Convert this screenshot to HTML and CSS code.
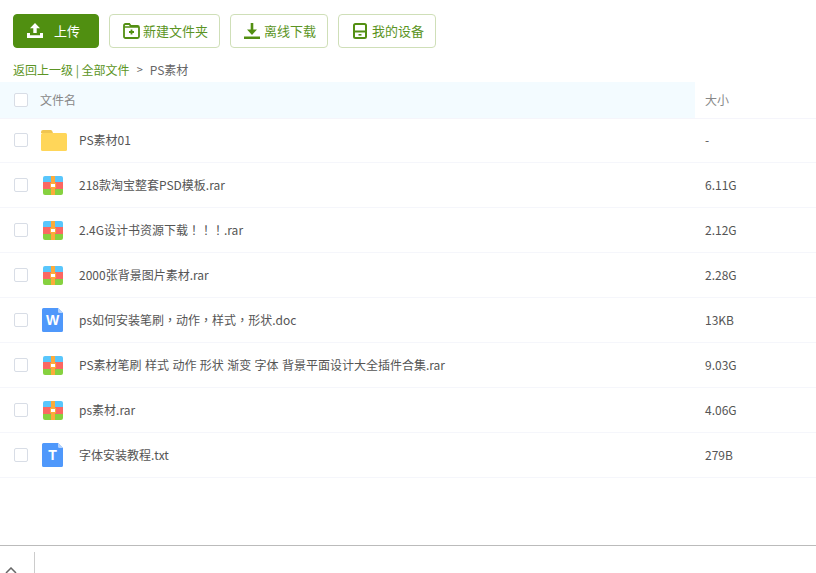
FILE: index.html
```html
<!DOCTYPE html>
<html lang="zh-CN">
<head>
<meta charset="utf-8">
<title>PS素材</title>
<link rel="stylesheet" href="styles.css">
</head>
<body>
<svg class="defs" width="0" height="0" aria-hidden="true">
  <symbol id="i-folder" viewBox="0 0 26 21">
    <path d="M0 2a2 2 0 0 1 2-2h7.500a2 2 0 0 1 1.600.8L12 3H0z" fill="#f0c550"/>
    <rect x="0" y="3" width="26" height="18" rx="1.500" fill="#ffd659"/>
  </symbol>
  <symbol id="i-rar" viewBox="0 0 20 19">
    <path d="M2 0h16a2 2 0 0 1 2 2v4H0V2a2 2 0 0 1 2-2z" fill="#59c6fb"/>
    <rect x="0" y="6" width="20" height="7" fill="#fb6762"/>
    <path d="M0 13h20v4a2 2 0 0 1-2 2H2a2 2 0 0 1-2-2z" fill="#86d13f"/>
    <rect x="8" y="0" width="4" height="19" fill="#fcab3a"/>
    <rect x="7.500" y="7.500" width="5" height="4" fill="#fff" stroke="#fcab3a" stroke-width="1"/>
  </symbol>
  <symbol id="i-doc" viewBox="0 0 21 24">
    <path d="M1.500 0H16l5 5v17.500a1.500 1.500 0 0 1-1.500 1.500h-18A1.500 1.500 0 0 1 0 22.500v-21A1.500 1.500 0 0 1 1.500 0z" fill="#4f98fb"/>
    <path d="M16 0l5 5h-3.500A1.500 1.500 0 0 1 16 3.500z" fill="#b5d3fd"/>
  </symbol>
</svg>

<div class="toolbar">
  <button class="btn btn-primary">
    <svg viewBox="0 0 16 15" width="16" height="15"><path d="M8 0l5 5.200H9.700V10H6.300V5.200H3z" fill="#fff"/><path d="M0 10h3v2.300h10V10h3v5H0z" fill="#fff"/></svg>
    <span>上传</span>
  </button>
  <button class="btn btn-new">
    <svg viewBox="0 0 17 16" width="17" height="16"><path d="M1 3V2.500A1.500 1.500 0 0 1 2.500 1h3.800l1.500 2H14.500A1.500 1.500 0 0 1 16 4.500v9a1.500 1.500 0 0 1-1.500 1.500h-12A1.500 1.500 0 0 1 1 13.500z" fill="none" stroke="#538f12" stroke-width="1.800"/><path d="M1 4h15" stroke="#538f12" stroke-width="1.500"/><path d="M8.500 6.500v5M6 9h5" stroke="#538f12" stroke-width="1.800"/></svg>
    <span>新建文件夹</span>
  </button>
  <button class="btn btn-down">
    <svg viewBox="0 0 16 16" width="16" height="16"><path d="M6.700 0h2.600v6.500H13L8 12 3 6.500h3.700z" fill="#538f12"/><path d="M0 13.500h16V16H0z" fill="#538f12"/></svg>
    <span>离线下载</span>
  </button>
  <button class="btn btn-device">
    <svg viewBox="0 0 14 16" width="14" height="16"><rect x="1" y="1" width="12" height="14" rx="1.500" fill="none" stroke="#538f12" stroke-width="2"/><path d="M1 8.500h12" stroke="#538f12" stroke-width="2"/><path d="M5.500 11.800h3" stroke="#538f12" stroke-width="1.600"/></svg>
    <span>我的设备</span>
  </button>
</div>

<div class="crumbs"><span class="crumb-link">返回上一级 | 全部文件</span><span class="crumb-sep">&gt;</span><span>PS素材</span></div>

<div class="table-head">
  <div class="cell-check"><span class="check"></span></div>
  <div class="head-name">文件名</div>
  <div class="head-size">大小</div>
</div>

<div class="row">
  <div class="cell-check"><span class="check"></span></div>
  <div class="cell-icon"><svg class="fi-folder"><use href="#i-folder"/></svg></div>
  <div class="cell-name">PS素材01</div>
  <div class="cell-size">-</div>
</div>
<div class="row">
  <div class="cell-check"><span class="check"></span></div>
  <div class="cell-icon"><svg class="fi-rar"><use href="#i-rar"/></svg></div>
  <div class="cell-name">218款淘宝整套PSD模板.rar</div>
  <div class="cell-size">6.11G</div>
</div>
<div class="row">
  <div class="cell-check"><span class="check"></span></div>
  <div class="cell-icon"><svg class="fi-rar"><use href="#i-rar"/></svg></div>
  <div class="cell-name">2.4G设计书资源下载<span class="punct" lang="zh-Hant">！！！</span>.rar</div>
  <div class="cell-size">2.12G</div>
</div>
<div class="row">
  <div class="cell-check"><span class="check"></span></div>
  <div class="cell-icon"><svg class="fi-rar"><use href="#i-rar"/></svg></div>
  <div class="cell-name">2000张背景图片素材.rar</div>
  <div class="cell-size">2.28G</div>
</div>
<div class="row">
  <div class="cell-check"><span class="check"></span></div>
  <div class="cell-icon"><span class="fi-doc"><svg><use href="#i-doc"/></svg><b class="fi-letter">W</b></span></div>
  <div class="cell-name">ps如何安装笔刷<span class="punct" lang="zh-Hant">，</span>动作<span class="punct" lang="zh-Hant">，</span>样式<span class="punct" lang="zh-Hant">，</span>形状.doc</div>
  <div class="cell-size">13KB</div>
</div>
<div class="row">
  <div class="cell-check"><span class="check"></span></div>
  <div class="cell-icon"><svg class="fi-rar"><use href="#i-rar"/></svg></div>
  <div class="cell-name">PS素材笔刷 样式 动作 形状 渐变 字体 背景平面设计大全插件合集.rar</div>
  <div class="cell-size">9.03G</div>
</div>
<div class="row">
  <div class="cell-check"><span class="check"></span></div>
  <div class="cell-icon"><svg class="fi-rar"><use href="#i-rar"/></svg></div>
  <div class="cell-name">ps素材.rar</div>
  <div class="cell-size">4.06G</div>
</div>
<div class="row">
  <div class="cell-check"><span class="check"></span></div>
  <div class="cell-icon"><span class="fi-doc"><svg><use href="#i-doc"/></svg><b class="fi-letter">T</b></span></div>
  <div class="cell-name">字体安装教程.txt</div>
  <div class="cell-size">279B</div>
</div>

<div class="bottom-bar">
  <div class="bottom-toggle"><svg viewBox="0 0 12 7" width="12" height="7"><path d="M1 6l5-5 5 5" fill="none" stroke="#666" stroke-width="1.500"/></svg></div>
  <div class="bottom-divider"></div>
</div>
</body>
</html>
```
FILE: styles.css
```css
* { box-sizing: border-box; }
html, body { margin: 0; height: 100%; }
body {
  position: relative;
  height: 573px;
  overflow: hidden;
  background: #fff;
  font-family: "Noto Sans CJK SC", "Open Sans", sans-serif;
  font-size: 12px;
  color: #666;
}
.defs { position: absolute; }

.toolbar { display: flex; gap: 10px; padding: 14px 0 0 13px; height: 60px; }
.btn {
  display: flex;
  align-items: center;
  height: 34px;
  padding: 0 0 0 13px;
  border: 1px solid #cfdfb8;
  border-radius: 4px;
  background: #fff;
  color: #5b9424;
  font: inherit;
  font-size: 13px;
}
.btn span { padding-bottom: 2px; }
.btn-primary {
  width: 86px;
  gap: 11px;
  border-color: #508f11;
  background: #508f11;
  color: #fff;
}
.btn-primary svg { margin-bottom: 1px; }
.btn-new { width: 111px; gap: 3px; }
.btn-down { width: 98px; gap: 4px; }
.btn-device { width: 98px; gap: 5px; padding-left: 14px; }

.crumbs { display: flex; align-items: center; height: 22px; padding: 0 0 4px 13px; font-size: 12px; color: #666; }
.crumb-link { color: #5b9424; }
.crumb-sep { margin: 0 7px; font-size: 11px; }

.table-head {
  display: flex;
  align-items: center;
  height: 36px;
  color: #888;
  background: linear-gradient(#f3fbff, #f3fbff) 0 0 / 695px 100% no-repeat;
  box-shadow: 0 1px 0 #f5f5fb;
}
.head-name { flex: none; width: 655px; padding-bottom: 2px; }
.head-size { padding: 0 0 2px 10px; }

.cell-check { flex: none; width: 40px; padding-left: 14px; display: flex; align-items: center; }
.check { display: block; width: 14px; height: 14px; border: 1px solid #d8dde6; border-radius: 2px; background: #fff; }

.row { display: flex; align-items: center; height: 45px; border-bottom: 1px solid #f5f6fb; color: #555; }
.cell-icon { flex: none; width: 39px; display: flex; align-items: center; padding-left: 1px; }
.cell-name { flex: none; width: 626px; padding-bottom: 2px; word-spacing: 0.7px; }
.cell-size { padding-bottom: 2px; }
.punct { font-family: "Noto Sans CJK TC", sans-serif; }

.fi-folder { width: 26px; height: 21px; display: block; margin-top: 1px; }
.fi-rar { width: 20px; height: 19px; display: block; margin: 1px 0 0 2px; }
.fi-doc { position: relative; display: block; width: 21px; height: 24px; margin-left: 1px; }
.fi-doc svg { display: block; width: 21px; height: 24px; }
.fi-letter {
  position: absolute;
  left: 0;
  right: 0;
  top: 2px;
  text-align: center;
  font: bold 14px/20px "Liberation Sans", sans-serif;
  color: #fff;
}

.bottom-bar {
  position: absolute;
  left: 0;
  right: 0;
  top: 545px;
  height: 28px;
  border-top: 1px solid #bbb;
  display: flex;
}
.bottom-toggle { flex: none; width: 34px; padding: 21px 0 0 5px; }
.bottom-toggle svg { display: block; }
.bottom-divider { width: 1px; margin-top: 6px; background: #ccc; }
```
